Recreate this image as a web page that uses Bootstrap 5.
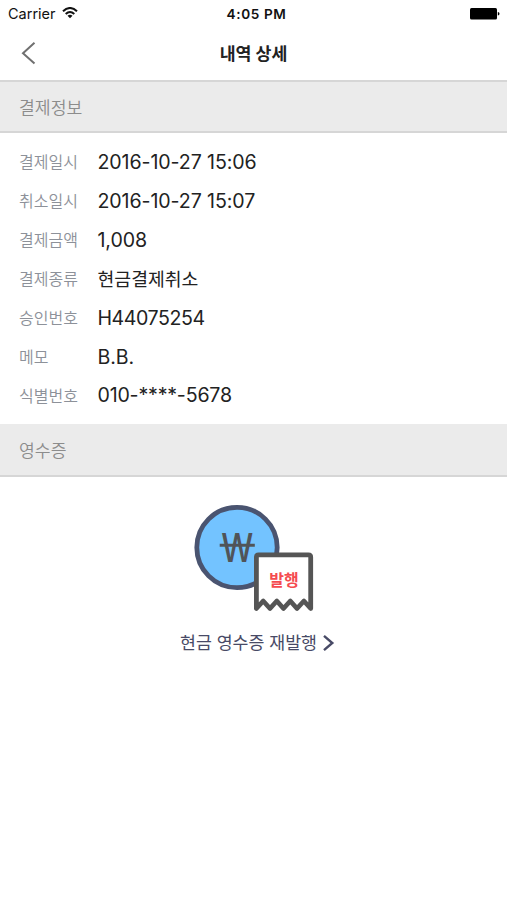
<!DOCTYPE html>
<html lang="ko">
<head>
<meta charset="utf-8">
<meta name="viewport" content="width=device-width, initial-scale=1">
<title>내역 상세</title>
<link href="https://cdn.jsdelivr.net/npm/bootstrap@5.3.0/dist/css/bootstrap.min.css" rel="stylesheet">
<style>
body{font-family:Inter,"Noto Sans CJK KR",sans-serif;color:#222;background:#fff;overflow:hidden}
.status-bar{height:28px;font-size:14.5px;line-height:28px;color:#111;padding:0 7px 0 8px}
.status-bar .clock{font-size:13.6px;font-weight:600;letter-spacing:.6px;margin:0 -2px 0 3px}
.title-bar{height:52px;padding:0 20px}
.title-bar h1{font-size:17.3px;line-height:50px;font-weight:700;letter-spacing:0;color:#222}
.side{flex:1 1 0}
.section-head{height:53px;padding:0 19px;background:#ebebeb;border-bottom:2px solid #d6d6d6;font-size:17.2px;line-height:54px;color:#8c8c8c;font-weight:350}
.section-head.first{border-top:2px solid #d6d6d6;line-height:51px}
.details{padding:10px 19px 0;height:291px}
.detail-row{height:39px}
.detail-row dt{width:78.5px;font-size:16px;font-weight:350;color:#8d9199;line-height:39px}
.detail-row dd{font-size:19.6px;line-height:39px;letter-spacing:-.1px}
.detail-row dd.ko{font-size:18.3px;letter-spacing:0}
.detail-row dd.code{letter-spacing:-.45px}
.detail-row:last-child{height:38px}
.detail-row:last-child dd{line-height:37px;letter-spacing:-.2px}
.receipt{padding-top:26px}
.receipt a{color:#484a66;font-size:17.3px;line-height:24px;margin:18px 0 0 9px;gap:5px}
svg{display:block}
</style>
</head>
<body>
<header>
  <div class="status-bar d-flex align-items-center">
    <div class="side d-flex align-items-center"><span>Carrier</span>
      <svg class="ms-1" style="margin-top:-2px" width="19" height="12" viewBox="-2 0 19 12" fill="none" stroke="#111" stroke-width="2"><path d="M1 4.3Q8-2.3 15 4.3M3.7 7Q8 3 12.3 7"/><path d="M5.5 8.8Q8 6.7 10.5 8.8L8 11.3Z" fill="#111" stroke="none"/></svg>
    </div>
    <span class="clock">4:05 PM</span>
    <div class="side d-flex justify-content-end"><svg width="31" height="15" viewBox="0 0 31 15"><rect x="1" y=".9" width="27" height="11.6" rx="1.5"/><path d="M28.8 4.9Q30.5 5.2 30.5 6.7T28.8 8.5Z"/></svg></div>
  </div>
  <div class="title-bar d-flex align-items-center">
    <div class="side"><svg width="17" height="26" viewBox="0 0 17 26" fill="none" stroke="#707070" stroke-width="2"><path d="M14.5 1.8 3 12.2 14.5 22.5"/></svg></div>
    <h1 class="m-0">내역 상세</h1>
    <div class="side"></div>
  </div>
</header>
<main>
  <h2 class="section-head first m-0">결제정보</h2>
  <dl class="details m-0">
    <div class="detail-row d-flex"><dt>결제일시</dt><dd class="m-0">2016-10-27 15:06</dd></div>
    <div class="detail-row d-flex"><dt>취소일시</dt><dd class="m-0">2016-10-27 15:07</dd></div>
    <div class="detail-row d-flex"><dt>결제금액</dt><dd class="m-0">1,008</dd></div>
    <div class="detail-row d-flex"><dt>결제종류</dt><dd class="m-0 ko">현금결제취소</dd></div>
    <div class="detail-row d-flex"><dt>승인번호</dt><dd class="m-0 code">H44075254</dd></div>
    <div class="detail-row d-flex"><dt>메모</dt><dd class="m-0">B.B.</dd></div>
    <div class="detail-row d-flex"><dt>식별번호</dt><dd class="m-0">010-****-5678</dd></div>
  </dl>
  <h2 class="section-head m-0">영수증</h2>
  <section class="receipt d-flex flex-column align-items-center">
    <svg width="121" height="110" viewBox="0 0 121 110">
      <circle cx="44" cy="44.5" r="40.2" fill="#73c3ff" stroke="#4a5470" stroke-width="4.8"/>
      <text x="44.2" y="58.7" text-anchor="middle" font-size="39" font-weight="500" fill="#505459" textLength="32" lengthAdjust="spacingAndGlyphs">W</text>
      <path d="M26.7 42.2H61.8" stroke="#505459" stroke-width="3"/>
      <path d="M63.4 105.5V54Q63.4 51.8 65.6 51.8H115.5Q117.7 51.8 117.7 54V105.5L110.9 98 104 105.5 97.3 98 90.5 105.5 83.8 98 77 105.5 70.2 98Z" fill="#fff" stroke="#555" stroke-width="4.8" stroke-linejoin="round"/>
      <text x="91" y="83" text-anchor="middle" font-size="16" font-weight="700" fill="#f54b50">발행</text>
    </svg>
    <a href="#" class="d-flex align-items-center text-decoration-none"><span>현금 영수증 재발행</span><svg width="14" height="18" viewBox="0 0 14 18" fill="none" stroke="#484a66" stroke-width="2.4"><path d="M2 1.8 10.3 9 2 16.2"/></svg></a>
  </section>
</main>
<script src="https://cdn.jsdelivr.net/npm/bootstrap@5.3.0/dist/js/bootstrap.bundle.min.js"></script>
</body>
</html>
